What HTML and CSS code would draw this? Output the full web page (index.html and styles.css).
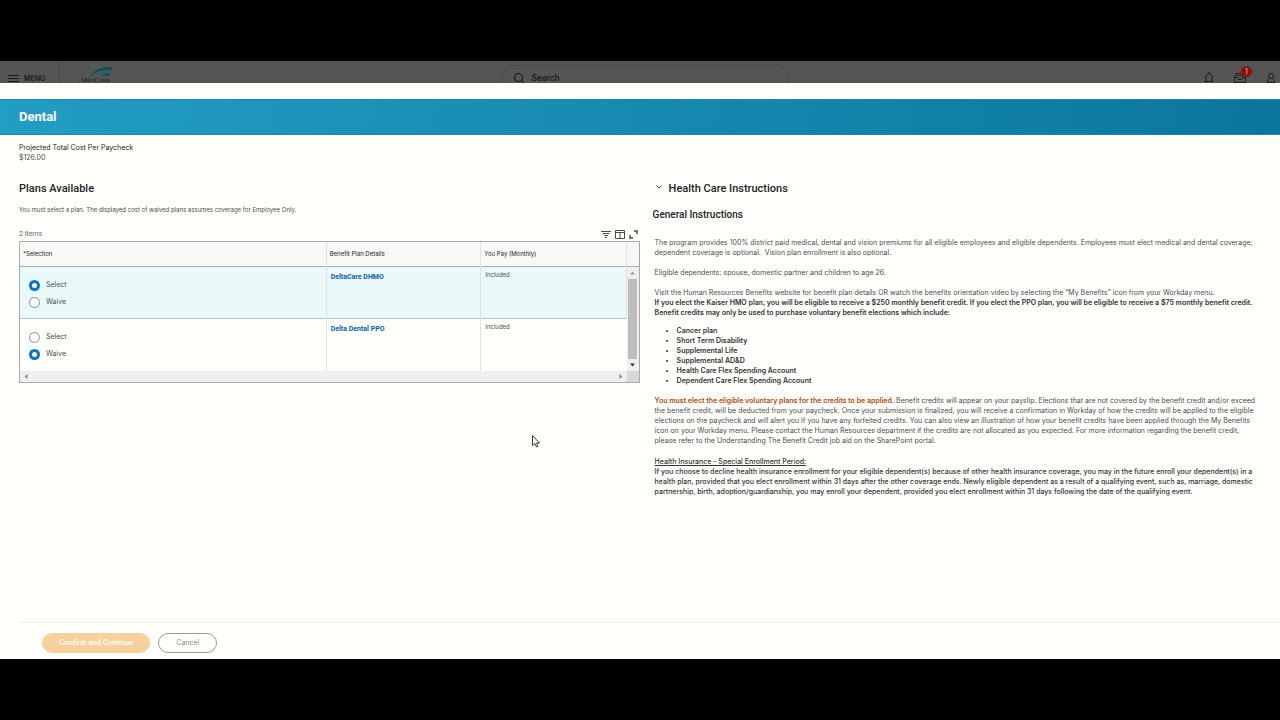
FILE: index.html
```html
<!DOCTYPE html>
<html lang="en">
<head>
    <meta charset="UTF-8">
    <meta name="viewport" content="width=device-width, initial-scale=1.0">
    <title>Dental</title>
    <link rel="stylesheet" href="styles.css">
</head>
<body>
    <header class="topbar">
        <button type="button" class="menu-button">
            <svg width="11" height="8" viewBox="0 0 11 8" stroke="currentColor" stroke-width="1"><path d="M0 .5h11M0 3.5h11M0 6.5h11"/></svg>
            MENU
        </button>
        <a href="#" class="logo" aria-label="MiraCosta">
            <svg width="38" height="20" viewBox="0 0 38 20">
                <path d="M12 11C16 4 23 1 34 1l-1 3C25 3 18 5 12 11z" fill="#0d4a5c"/>
                <path d="M17 10c4-4 9-6 16-5l-1 2c-6-1-10 0-15 3z" fill="#176577"/>
                <path d="M22 10c3-2 6-3 10-2l-1 2c-3-1-6-1-9 0z" fill="#0d4a5c"/>
                <text x="3" y="16" class="logo-text">MiraCosta</text>
                <path d="M0 17h2M5 17.5h25" stroke="#222" stroke-width="1" stroke-dasharray="2 1"/>
            </svg>
        </a>
        <label class="search">
            <svg width="12" height="12" viewBox="0 0 12 12" fill="none" stroke="currentColor" stroke-width="1.2"><circle cx="5.5" cy="5.5" r="4"/><path d="M8.5 8.5l2 2"/></svg>
            <input type="text" placeholder="Search" aria-label="Search">
        </label>
        <div class="topbar-actions">
            <button type="button" aria-label="Notifications">
                <svg width="10" height="12" viewBox="0 0 10 12" fill="none" stroke="currentColor"><path d="M.5 9.5h9M2 9.500V5c0-2 1-3.500 3-3.500S8 3 8 5v4.500M5 0v1.500M4 11.500h2"/></svg>
            </button>
            <button type="button" class="inbox" aria-label="Inbox">
                <svg width="12" height="12" viewBox="0 0 12 12" fill="none" stroke="currentColor"><path d="M.5 5.500L2 1.500h8l1.500 4v5H.5zM.5 5.500h3l1 2h3l1-2h3M3 3.500h6"/></svg>
                <span class="badge">1</span>
            </button>
            <button type="button" aria-label="Profile">
                <svg width="10" height="12" viewBox="0 0 10 12" fill="none" stroke="currentColor"><circle cx="5" cy="4" r="2.500"/><path d="M1.500 11.500V9c0-1 1-2 2-2.500M8.500 11.500V9c0-1-1-2-2-2.500M1 10.500h8"/></svg>
            </button>
        </div>
    </header>

    <main class="modal">
        <div class="banner"><h1>Dental</h1></div>

        <div class="content">
            <div class="cost">
                <div class="cost-label">Projected Total Cost Per Paycheck</div>
                <div class="cost-value">$126.00</div>
            </div>

            <div class="columns">
                <section>
                    <h2>Plans Available</h2>
                    <p class="hint">You must select a plan. The displayed cost of waived plans assumes coverage for Employee Only.</p>

                    <div class="grid-toolbar">
                        <span class="item-count">2 items</span>
                        <button type="button" aria-label="Filter">
                            <svg width="10" height="8" viewBox="0 0 10 8" stroke="currentColor"><path d="M0 1.500h10M1.500 3.500h7M3 5.500h4M4 7.500h2"/></svg>
                        </button>
                        <button type="button" aria-label="Columns">
                            <svg width="10" height="9" viewBox="0 0 10 9" fill="none" stroke="currentColor"><path d="M.5.5h9v8h-9zM.5 2.500h9M5 2.500v6"/></svg>
                        </button>
                        <button type="button" aria-label="Full screen">
                            <svg width="9" height="9" viewBox="0 0 9 9" fill="none" stroke="currentColor" stroke-width="1.500"><path d="M5 1h3v3M1 5v3h3"/></svg>
                        </button>
                    </div>

                    <div class="grid">
                        <table>
                            <colgroup>
                                <col class="col-selection">
                                <col class="col-details">
                                <col>
                                <col class="col-scroll">
                            </colgroup>
                            <thead>
                                <tr>
                                    <th>*Selection</th>
                                    <th>Benefit Plan Details</th>
                                    <th>You Pay (Monthly)</th>
                                    <td></td>
                                </tr>
                            </thead>
                            <tbody>
                                <tr class="selected">
                                    <td class="choices">
                                        <label><input type="radio" name="dhmo" checked>Select</label>
                                        <label><input type="radio" name="dhmo">Waive</label>
                                    </td>
                                    <td class="plan"><a href="#">DeltaCare DHMO</a></td>
                                    <td class="pay">Included</td>
                                    <td class="scroll-cell" rowspan="2">
                                        <div class="vscroll">
                                            <svg width="5" height="4" viewBox="0 0 5 4" fill="#999"><path d="M0 3.500L2.500.5 5 3.500z"/></svg>
                                            <div class="thumb"></div>
                                            <svg width="5" height="4" viewBox="0 0 5 4" fill="#333"><path d="M0 .5h5L2.500 3.500z"/></svg>
                                        </div>
                                    </td>
                                </tr>
                                <tr>
                                    <td class="choices">
                                        <label><input type="radio" name="ppo">Select</label>
                                        <label><input type="radio" name="ppo" checked>Waive</label>
                                    </td>
                                    <td class="plan"><a href="#">Delta Dental PPO</a></td>
                                    <td class="pay">Included</td>
                                </tr>
                            </tbody>
                        </table>
                        <div class="hscroll">
                            <svg width="4" height="5" viewBox="0 0 4 5" fill="#888"><path d="M3.500 0v5L.5 2.500z"/></svg>
                            <svg width="4" height="5" viewBox="0 0 4 5" fill="#888"><path d="M.5 0v5l3-2.500z"/></svg>
                            <div class="corner"></div>
                        </div>
                    </div>
                </section>

                <section>
                    <h2 class="instructions-title">
                        <button type="button" aria-label="Collapse">
                            <svg width="6" height="4" viewBox="0 0 6 4" fill="none" stroke="currentColor"><path d="M.5.5L3 3 5.500.5"/></svg>
                        </button>
                        Health Care Instructions
                    </h2>
                    <h3>General Instructions</h3>

                    <div class="instructions">
                        <p>The program provides 100% district paid medical, dental and vision premiums for all eligible employees and eligible dependents. Employees must elect medical and dental coverage;<br>
                        dependent coverage is optional.&nbsp; Vision plan enrollment is also optional.</p>
                        <p>Eligible dependents: spouse, domestic partner and children to age 26.</p>
                        <p>Visit the Human Resources Benefits website for benefit plan details OR watch the benefits orientation video by selecting the “My Benefits” icon from your Workday menu.<br>
                        <strong>If you elect the Kaiser HMO plan, you will be eligible to receive a $250 monthly benefit credit. If you elect the PPO plan, you will be eligible to receive a $75 monthly benefit credit.<br>
                        Benefit credits may only be used to purchase voluntary benefit elections which include:</strong></p>
                        <ul>
                            <li>Cancer plan</li>
                            <li>Short Term Disability</li>
                            <li>Supplemental Life</li>
                            <li>Supplemental AD&amp;D</li>
                            <li>Health Care Flex Spending Account</li>
                            <li>Dependent Care Flex Spending Account</li>
                        </ul>
                        <p><strong class="warning">You must elect the eligible voluntary plans for the credits to be applied.</strong> Benefit credits will appear on your payslip. Elections that are not covered by the benefit credit and/or exceed<br>
                        the benefit credit, will be deducted from your paycheck. Once your submission is finalized, you will receive a confirmation in Workday of how the credits will be applied to the eligible<br>
                        elections on the paycheck and will alert you if you have any forfeited credits. You can also view an illustration of how your benefit credits have been applied through the My Benefits<br>
                        icon on your Workday menu. Please contact the Human Resources department if the credits are not allocated as you expected. For more information regarding the benefit credit,<br>
                        please refer to the Understanding The Benefit Credit job aid on the SharePoint portal.</p>
                        <p class="enrollment"><u>Health Insurance - Special Enrollment Period:</u><br>
                        If you choose to decline health insurance enrollment for your eligible dependent(s) because of other health insurance coverage, you may in the future enroll your dependent(s) in a<br>
                        health plan, provided that you elect enrollment within 31 days after the other coverage ends. Newly eligible dependent as a result of a qualifying event, such as, marriage, domestic<br>
                        partnership, birth, adoption/guardianship, you may enroll your dependent, provided you elect enrollment within 31 days following the date of the qualifying event.</p>
                    </div>
                </section>
            </div>
        </div>

        <footer class="actions">
            <button type="button" class="button primary">Confirm and Continue</button>
            <button type="button" class="button">Cancel</button>
        </footer>
    </main>

    <svg class="cursor" width="8" height="13" viewBox="0 0 8 13"><path d="M.5.5v10l2.300-2 1.700 3.500 1.500-.7L4.500 8h3z" fill="#fff" stroke="#222" stroke-width=".9"/></svg>
</body>
</html>
```

FILE: styles.css
```css
:root {
    --font-family-base: Inter, "Liberation Sans", sans-serif;
    --font-family-heading: Roboto, "Liberation Sans", sans-serif;
    --font-size-xs: 6px;
    --font-size-sm: 7px;
    --page: #fffffc;
    --text-primary: #222;
    --text-body: #4c4c4c;
    --link-blue: #0b5cad;
    --radio-blue: #0875c9;
    --border-color: #aaa;
    --border-light: #dfe3e3;
    --gutter: 19px;
}

* {
    box-sizing: border-box;
}

body {
    margin: 0;
    padding: 61px 0;
    min-height: 100vh;
    display: flex;
    flex-direction: column;
    background-color: #000;
    color: var(--text-body);
    font-family: var(--font-family-base);
    font-size: var(--font-size-sm);
    line-height: 10px;
}

button {
    padding: 0;
    border: none;
    background: none;
    color: inherit;
    font: inherit;
    cursor: pointer;
}

svg {
    display: block;
    flex: none;
}

h1, h2, h3, p {
    margin: 0;
}

h1, h2, h3 {
    font-family: var(--font-family-heading);
}

/* Top bar, dimmed behind the modal */
.topbar {
    height: 22px;
    display: grid;
    grid-template-columns: 60px 9fr 288px 10fr;
    overflow: hidden;
    background-color: #555;
    color: #1c1c1c;
}

.menu-button {
    display: flex;
    align-items: center;
    gap: 5px;
    height: 35px;
    padding-left: 8px;
    border-right: 1px solid #484848;
    font-weight: 600;
}

.logo {
    padding: 5px 0 0 18px;
}

.logo-text {
    font-family: "Liberation Serif", serif;
    font-size: 7px;
    fill: #1c1c1c;
}

.search {
    display: flex;
    align-items: center;
    gap: 6px;
    height: 26px;
    margin-top: 4px;
    padding-left: 11px;
    border: 1px solid #4a4a4a;
    border-radius: 13px;
}

.search input {
    flex: 1;
    padding: 0;
    border: none;
    outline: none;
    background: none;
    font: 500 9px var(--font-family-heading);
}

.search input::placeholder {
    color: #1c1c1c;
    opacity: 1;
}

.topbar-actions {
    display: flex;
    justify-content: flex-end;
    align-items: center;
    gap: 20px;
    height: 34px;
    padding-right: 4px;
}

.inbox {
    position: relative;
}

.badge {
    position: absolute;
    top: -6px;
    right: -6px;
    width: 11px;
    height: 11px;
    border-radius: 50%;
    background-color: #8c1111;
    color: #ccc;
    line-height: 11px;
}

/* Modal */
.modal {
    flex: 1;
    display: flex;
    flex-direction: column;
    padding-top: 16px;
    background-color: var(--page);
}

.banner {
    height: 36px;
    display: flex;
    align-items: center;
    padding: 0 var(--gutter);
    background: linear-gradient(100deg, #229dc4, #0b769d);
    border-top: 1px solid #2a8199;
    border-bottom: 1px solid #2a8199;
    color: #fff;
}

h1 {
    font-size: 13px;
    font-weight: 700;
    line-height: 16px;
}

.content {
    flex: 1;
    padding: 8px var(--gutter);
}

.cost-label {
    color: var(--text-primary);
}

.columns {
    display: grid;
    grid-template-columns: minmax(0, 51fr) minmax(0, 50fr);
    gap: 13px;
    margin-top: 19px;
}

h2 {
    color: var(--text-primary);
    font-size: 11px;
    font-weight: 500;
    line-height: 14px;
}

.hint {
    margin-top: 9px;
    font-size: var(--font-size-xs);
}

.grid-toolbar {
    display: flex;
    align-items: center;
    gap: 4px;
    margin-top: 14px;
    padding: 0 2px 2px 0;
}

.item-count {
    flex: 1;
    color: #5b6b78;
    font-family: var(--font-family-heading);
}

/* Plan grid */
.grid {
    border: 1px solid var(--border-color);
}

table {
    width: 100%;
    table-layout: fixed;
    border-collapse: collapse;
    font-size: var(--font-size-xs);
}

.col-selection {
    width: 49.5%;
}

.col-details {
    width: 25%;
}

.col-scroll {
    width: 12px;
}

th, td {
    padding: 0;
    text-align: left;
    vertical-align: top;
    border-right: 1px solid var(--border-light);
}

tr > :last-child {
    border-right: none;
}

thead {
    background-color: #f8f8f6;
}

thead tr {
    height: 24px;
    border-bottom: 1px solid var(--border-color);
}

th {
    padding: 0 3px;
    color: var(--text-primary);
    font-weight: 400;
    vertical-align: middle;
}

tbody tr {
    height: 52px;
}

tbody .selected {
    background-color: #eaf9fa;
    border-bottom: 1px solid #a9cbd3;
}

.choices {
    padding: 10px 9px 0;
    font-size: var(--font-size-sm);
}

.choices label {
    display: flex;
    align-items: center;
    gap: 6px;
    height: 17px;
}

.choices input {
    appearance: none;
    width: 11px;
    height: 11px;
    margin: 0;
    border: 1px solid #8b8f94;
    border-radius: 50%;
    background-color: #fff;
}

.choices input:checked {
    border: 3px solid var(--radio-blue);
}

.plan {
    padding: 5px 4px;
}

.plan a {
    color: var(--link-blue);
    font-family: var(--font-family-heading);
    font-size: var(--font-size-sm);
    font-weight: 700;
    text-decoration: none;
}

.pay {
    padding: 3px 4px;
}

.scroll-cell {
    background-color: #efefed;
}

.vscroll {
    display: flex;
    flex-direction: column;
    align-items: center;
    gap: 4px;
    height: 104px;
    padding: 4px 0;
}

.thumb {
    flex: 1;
    width: 9px;
    background-color: #bdbdbb;
}

.hscroll {
    display: flex;
    justify-content: space-between;
    align-items: center;
    height: 11px;
    padding-left: 4px;
    background-color: #efefed;
}

.corner {
    width: 12px;
    height: 11px;
    margin-left: 4px;
    background-color: #d8d8d6;
}

.hscroll svg:first-child {
    margin-right: auto;
}

/* Instructions */
.instructions-title {
    display: flex;
    gap: 7px;
    padding-left: 3px;
}

.instructions-title button {
    height: 10px;
    color: var(--link-blue);
}

h3 {
    margin-top: 13px;
    color: var(--text-primary);
    font-size: 10px;
    font-weight: 500;
    line-height: 12px;
}

.instructions {
    margin-top: 17px;
    padding-left: 2px;
    white-space: nowrap;
}

.instructions p {
    margin-bottom: 10px;
}

.instructions strong,
.instructions ul {
    color: #333;
    font-weight: 600;
}

.instructions ul {
    margin: -2px 0 10px;
    padding-left: 22px;
}

.instructions .warning {
    color: #b04a12;
}

.instructions .enrollment {
    margin-top: 11px;
    color: #333;
    font-weight: 500;
}

/* Footer */
.actions {
    display: flex;
    gap: 8px;
    margin-left: var(--gutter);
    padding: 10px 23px 6px;
    border-top: 1px solid #f0f0ee;
}

.button {
    height: 20px;
    padding: 0 17px;
    border: 1px solid #999;
    border-radius: 10px;
    color: #888;
}

.button.primary {
    padding: 0 16px;
    border-color: #f7d19b;
    background-color: #f7d19b;
    color: #fff;
    font-weight: 600;
}

.cursor {
    position: absolute;
    top: 435px;
    left: 532px;
}
```
